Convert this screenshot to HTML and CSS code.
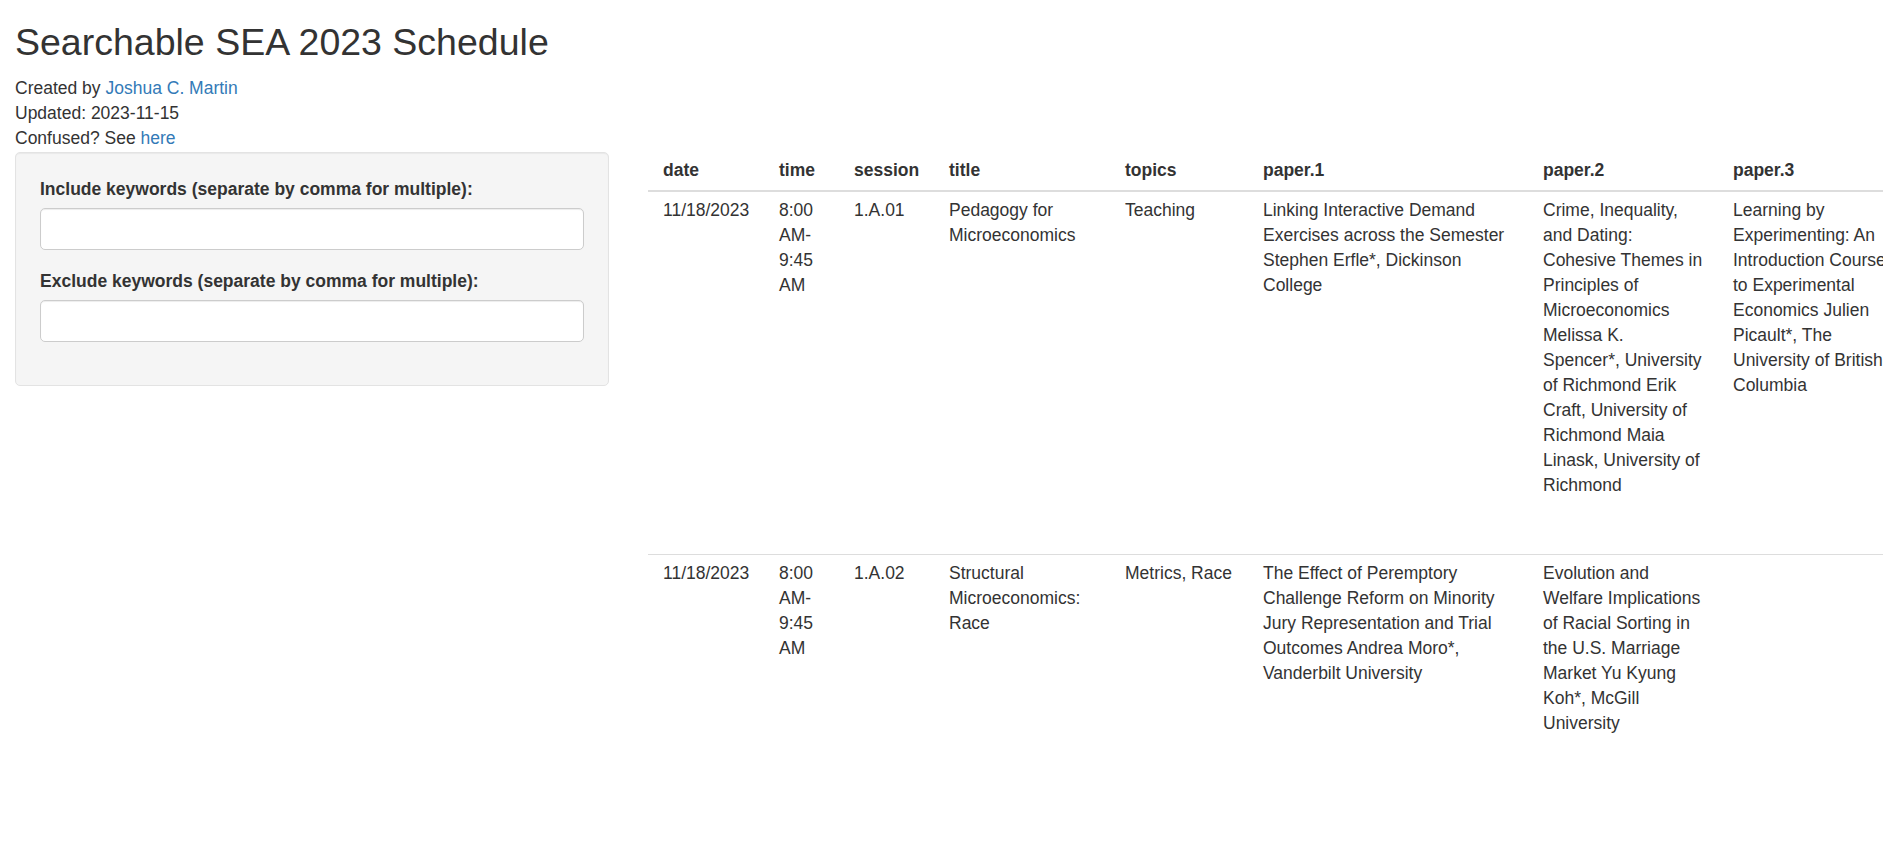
FILE: index.html
```html
<!DOCTYPE html>
<html lang="en">
<head>
<meta charset="utf-8">
<title>Searchable SEA 2023 Schedule</title>
<link rel="stylesheet" href="styles.css">
</head>
<body>
<div class="page">
  <h2 class="title">Searchable SEA 2023 Schedule</h2>
  <div class="meta">
    <div>Created by <a href="#">Joshua C. Martin</a></div>
    <div>Updated: 2023-11-15</div>
    <div>Confused? See <a href="#">here</a></div>
  </div>
  <div class="layout">
    <aside class="sidebar">
      <div class="well">
        <div class="form-group">
          <label class="control-label" for="inc">Include keywords (separate by comma for multiple):</label>
          <input id="inc" class="form-control" type="text">
        </div>
        <div class="form-group">
          <label class="control-label" for="exc">Exclude keywords (separate by comma for multiple):</label>
          <input id="exc" class="form-control" type="text">
        </div>
      </div>
    </aside>
    <main class="main">
      <table class="schedule">
        <colgroup>
          <col class="c-date"><col class="c-time"><col class="c-session"><col class="c-title"><col class="c-topics"><col class="c-p1"><col class="c-p2"><col class="c-p3">
        </colgroup>
        <thead>
          <tr><th>date</th><th>time</th><th>session</th><th>title</th><th>topics</th><th>paper.1</th><th>paper.2</th><th>paper.3</th></tr>
        </thead>
        <tbody>
          <tr class="row-tall">
            <td>11/18/2023</td>
            <td>8:00 AM-9:45 AM</td>
            <td>1.A.01</td>
            <td>Pedagogy for Microeconomics</td>
            <td>Teaching</td>
            <td>Linking Interactive Demand Exercises across the Semester Stephen Erfle*, Dickinson College</td>
            <td class="narrow">Crime, Inequality, and Dating: Cohesive Themes in Principles of Microeconomics Melissa K. Spencer*, University of Richmond Erik Craft, University of Richmond Maia Linask, University of Richmond</td>
            <td class="narrow">Learning by Experimenting: An Introduction Course to Experimental Economics Julien Picault*, The University of British Columbia</td>
          </tr>
          <tr class="row-tall">
            <td>11/18/2023</td>
            <td>8:00 AM-9:45 AM</td>
            <td>1.A.02</td>
            <td>Structural Microeconomics: Race</td>
            <td>Metrics, Race</td>
            <td>The Effect of Peremptory Challenge Reform on Minority Jury Representation and Trial Outcomes Andrea Moro*, Vanderbilt University</td>
            <td class="narrow">Evolution and Welfare Implications of Racial Sorting in the U.S. Marriage Market Yu Kyung Koh*, McGill University</td>
            <td class="narrow"></td>
          </tr>
        </tbody>
      </table>
    </main>
  </div>
</div>
</body>
</html>
```

FILE: styles.css
```css
html, body {
  margin: 0;
  padding: 0;
}
body {
  font-family: "Liberation Sans", Arial, Helvetica, sans-serif;
  font-size: 17.5px;
  line-height: 25px;
  color: #333;
  background: #fff;
  overflow: hidden;
}
a {
  color: #337ab7;
  text-decoration: none;
}
.page {
  padding: 0 0 0 15px;
}
.title {
  font-size: 37.5px;
  font-weight: 400;
  line-height: 41.25px;
  margin: 22.4px 0 12.5px 0;
  color: #333;
}
.meta {
  margin: 0;
}
.layout {
  display: flex;
  align-items: flex-start;
  gap: 39px;
  margin-top: 1px;
}
.sidebar {
  flex: 0 0 594px;
}
.well {
  background: #f5f5f5;
  border: 1px solid #e3e3e3;
  border-radius: 5px;
  box-shadow: inset 0 1px 1px rgba(0, 0, 0, 0.05);
  padding: 24px;
}
.form-group {
  margin-bottom: 18.75px;
}
.control-label {
  display: block;
  font-weight: 700;
  margin-bottom: 6.25px;
}
.form-control {
  display: block;
  box-sizing: border-box;
  width: 100%;
  height: 42px;
  margin: 0;
  padding: 7.5px 15px;
  font-family: inherit;
  font-size: 17.5px;
  color: #555;
  background: #fff;
  border: 1px solid #ccc;
  border-radius: 5px;
  box-shadow: inset 0 1px 1px rgba(0, 0, 0, 0.075);
}
.main {
  flex: 1 1 auto;
  min-width: 0;
  overflow: hidden;
}
.schedule {
  border-collapse: collapse;
  table-layout: fixed;
  width: 1260px;
}
.c-date { width: 116px; }
.c-time { width: 75px; }
.c-session { width: 95px; }
.c-title { width: 176px; }
.c-topics { width: 138px; }
.c-p1 { width: 280px; }
.c-p2 { width: 190px; }
.c-p3 { width: 190px; }
.schedule th,
.schedule td {
  padding: 6.25px 11px 6.25px 15px;
  text-align: left;
  vertical-align: top;
}
.schedule td.narrow {
  padding-right: 15px;
}
.schedule th {
  font-weight: 700;
  border-bottom: 2px solid #ddd;
}
.schedule td {
  border-top: 1px solid #ddd;
}
.schedule tbody tr:first-child td {
  border-top: 0;
}
.row-tall td {
  height: 350px;
}
```
